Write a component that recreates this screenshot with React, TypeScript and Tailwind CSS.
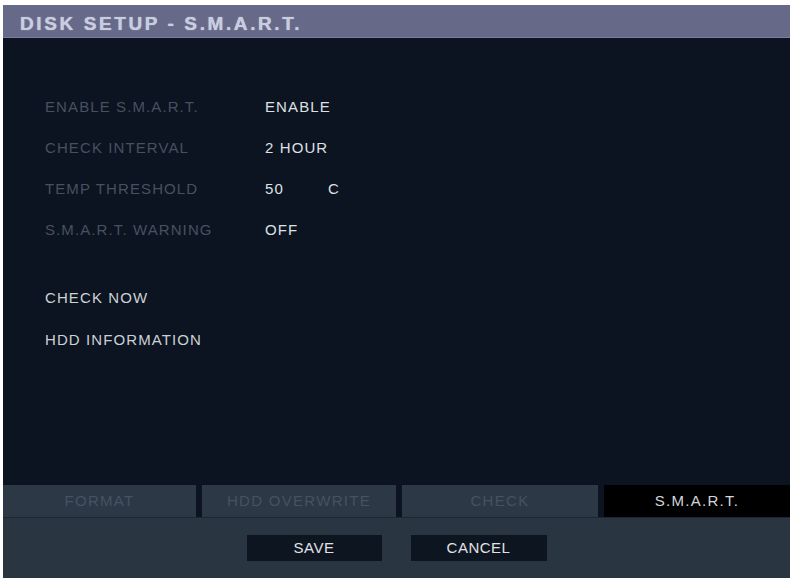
import React from "react"

const settings = [
  { label: "ENABLE S.M.A.R.T.", value: "ENABLE" },
  { label: "CHECK INTERVAL", value: "2 HOUR" },
  { label: "TEMP THRESHOLD", value: "50", unit: "C" },
  { label: "S.M.A.R.T. WARNING", value: "OFF" },
]

const tabs = [
  { name: "FORMAT", width: "w-[193px]" },
  { name: "HDD OVERWRITE", width: "w-[194px]" },
  { name: "CHECK", width: "w-[196px]" },
  { name: "S.M.A.R.T.", width: "flex-1", active: true },
]

export default function App() {
  const font = { fontFamily: '"Liberation Sans", Arial, sans-serif' }

  return (
    <div className="w-[792px] h-[582px] bg-white pt-[5px] pl-[3px] pr-[2px] pb-[4px] overflow-hidden" style={font}>
      <div className="flex h-full flex-col bg-[#0b1420]">
        {/* Title */}
        <div className="flex h-[33px] items-center bg-[#666a88] pl-[17px] pt-[6px] border-b border-[#7b7f9c]">
          <span className="text-[19px] font-bold tracking-[2.6px] text-[#c9cde0] [text-shadow:0_0_1px_#c9cde0]">
            DISK SETUP - S.M.A.R.T.
          </span>
        </div>

        {/* Body */}
        <div className="flex-1 pl-[42px] pt-[49px] text-[15px] tracking-[1.1px]">
          {settings.map((s) => (
            <div key={s.label} className="flex h-[41px] items-center">
              <span className="w-[220px] text-[#485060]">{s.label}</span>
              <span className="text-[#dde0e4]">{s.value}</span>
              {s.unit && <span className="ml-[44px] text-[#dde0e4]">{s.unit}</span>}
            </div>
          ))}
          <div className="mt-[27px] flex h-[41px] items-center text-[#cdd1d6]">CHECK NOW</div>
          <div className="mt-[1px] flex h-[41px] items-center text-[#cdd1d6]">HDD INFORMATION</div>
        </div>

        {/* Tabs */}
        <div className="flex h-[32px] gap-[6px] text-[15px] tracking-[1.3px]">
          {tabs.map((t) => (
            <div
              key={t.name}
              className={
                t.width +
                " flex items-center justify-center " +
                (t.active ? "bg-black text-[#d4d6d8]" : "bg-[#2c3846] text-[#465260]")
              }
            >
              {t.name}
            </div>
          ))}
        </div>

        {/* Bottom bar */}
        <div className="flex h-[61px] items-center justify-center gap-[29px] bg-[#2a3542] border-t border-[#1d2632] text-[15px] tracking-[0.5px]">
          <button className="h-[26px] w-[135px] bg-[#0d1520] text-[#e0e2e6]">SAVE</button>
          <button className="h-[26px] w-[136px] bg-[#0d1520] text-[#e0e2e6]">CANCEL</button>
        </div>
      </div>
    </div>
  )
}
